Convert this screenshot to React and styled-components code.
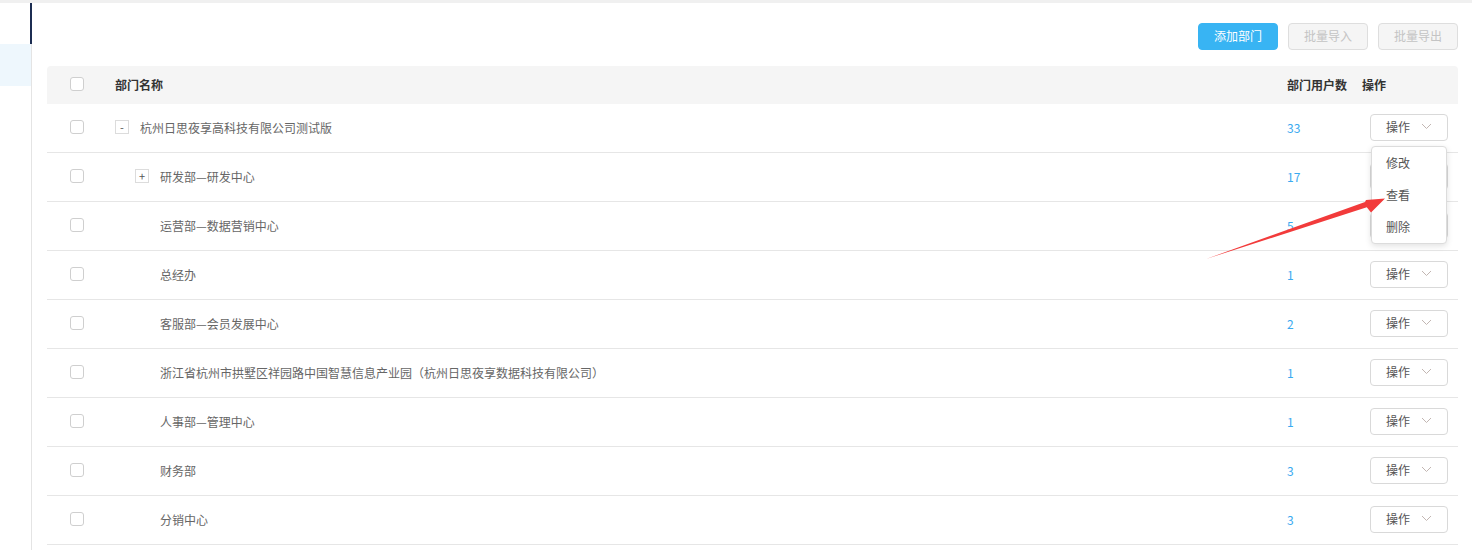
import React from "react";
import styled, { createGlobalStyle } from "styled-components";

const GlobalStyle = createGlobalStyle`
  html, body { margin: 0; padding: 0; background: #fff; }
  body {
    font-family: "Noto Sans CJK SC", "Noto Sans", "Liberation Sans", sans-serif;
    font-size: 12px;
    color: #666;
  }
  * { box-sizing: border-box; }
`;

const Page = styled.div`
  position: relative;
  width: 1472px;
  height: 550px;
  overflow: hidden;
  display: flex;
  flex-direction: column;
`;

const TopStrip = styled.div`
  height: 3px;
  background: #f0f0f0;
  flex-shrink: 0;
`;

const Body = styled.div`
  flex: 1;
  display: flex;
`;

const Sidebar = styled.div`
  width: 32px;
  flex-shrink: 0;
  border-right: 1px solid #e4e4e4;
  display: flex;
  flex-direction: column;
`;

const SideItem = styled.div`
  position: relative;
  height: ${(p) => p.$h}px;
  background: ${(p) => (p.$highlight ? "#eef7fd" : "transparent")};
  &::after {
    content: "";
    display: ${(p) => (p.$active ? "block" : "none")};
    position: absolute;
    top: 0;
    bottom: 0;
    right: -1px;
    width: 2px;
    background: #1c2d52;
  }
`;

const Main = styled.div`
  flex: 1;
  padding: 20px 14px 0 15px;
  display: flex;
  flex-direction: column;
`;

const Toolbar = styled.div`
  display: flex;
  justify-content: flex-end;
  gap: 10px;
`;

const ToolButton = styled.button`
  width: 80px;
  height: 27px;
  border-radius: 4px;
  font-family: inherit;
  font-size: 12px;
  padding: 0 0 2px;
  cursor: ${(p) => (p.disabled ? "not-allowed" : "pointer")};
  border: 1px solid ${(p) => (p.$primary ? "#38b4f3" : "#dedede")};
  background: ${(p) => (p.$primary ? "#38b4f3" : "#f5f5f5")};
  color: ${(p) => (p.$primary ? "#fff" : "#c4c4c4")};
`;

const Table = styled.div`
  margin-top: 16px;
  display: flex;
  flex-direction: column;
`;

const cols = "68px 1fr 75px 96px";

const HeaderRow = styled.div`
  display: grid;
  grid-template-columns: ${cols};
  align-items: center;
  height: 38px;
  padding-bottom: 2px;
  background: #f5f5f5;
  border-radius: 4px 4px 0 0;
  color: #333;
  font-weight: 700;
`;

const Row = styled.div`
  display: grid;
  grid-template-columns: ${cols};
  align-items: center;
  height: 49px;
  padding-bottom: 2px;
  border-bottom: 1px solid #e6e6e6;
`;

const CheckCell = styled.div`
  padding-left: 23px;
  display: flex;
  align-items: center;
`;

const Checkbox = styled.span`
  display: inline-block;
  width: 14px;
  height: 14px;
  border: 1px solid #cfcfcf;
  border-radius: 3px;
  background: #fff;
`;

const NameCell = styled.div`
  display: flex;
  align-items: center;
  padding-left: ${(p) => p.$level * 20}px;
  white-space: nowrap;
`;

const Toggle = styled.span`
  width: 14px;
  height: 14px;
  flex-shrink: 0;
  margin-right: 11px;
  border: 1px solid ${(p) => (p.$empty ? "transparent" : "#dcdcdc")};
  display: flex;
  align-items: center;
  justify-content: center;
  font-size: 11px;
  line-height: 1;
  color: #555;
`;

const CountCell = styled.div`
  color: #3aaaf0;
`;

const ActionCell = styled.div`
  padding-left: 8px;
`;

const ActionWrap = styled.div`
  position: relative;
  width: 78px;
`;

const ActionButton = styled.button`
  width: 78px;
  height: 27px;
  display: flex;
  align-items: center;
  padding: 0 0 1px 15px;
  background: #fff;
  border: 1px solid #d9d9d9;
  border-radius: 4px;
  font-family: inherit;
  font-size: 12px;
  color: #555;
  cursor: pointer;
  svg { margin-left: 11px; }
`;

const Menu = styled.div`
  position: absolute;
  top: calc(100% + 5px);
  left: 1px;
  width: 76px;
  background: #fff;
  border: 1px solid #dcdcdc;
  border-radius: 4px;
  box-shadow: 0 2px 6px rgba(0, 0, 0, 0.12);
  z-index: 10;
`;

const MenuItem = styled.div`
  height: 32px;
  line-height: 31px;
  padding-left: 14px;
  color: #555;
  cursor: pointer;
`;

const Overlay = styled.svg`
  position: absolute;
  left: 0;
  top: 0;
  pointer-events: none;
  z-index: 20;
`;

const Chevron = () => (
  <svg width="11" height="7" viewBox="0 0 11 7">
    <polyline points="1,1 5.5,5.5 10,1" fill="none" stroke="#c2b6b2" strokeWidth="1" />
  </svg>
);

const rows = [
  { name: "杭州日思夜享高科技有限公司测试版", level: 0, toggle: "-", count: 33, menu: true },
  { name: "研发部—研发中心", level: 1, toggle: "+", count: 17 },
  { name: "运营部—数据营销中心", level: 1, count: 5 },
  { name: "总经办", level: 1, count: 1 },
  { name: "客服部—会员发展中心", level: 1, count: 2 },
  { name: "浙江省杭州市拱墅区祥园路中国智慧信息产业园（杭州日思夜享数据科技有限公司）", level: 1, count: 1 },
  { name: "人事部—管理中心", level: 1, count: 1 },
  { name: "财务部", level: 1, count: 3 },
  { name: "分销中心", level: 1, count: 3 },
];

export default function App() {
  return (
    <Page>
      <GlobalStyle />
      <TopStrip />
      <Body>
        <Sidebar>
          <SideItem $h={41} $active />
          <SideItem $h={42} $highlight />
        </Sidebar>
        <Main>
          <Toolbar>
            <ToolButton $primary>添加部门</ToolButton>
            <ToolButton disabled>批量导入</ToolButton>
            <ToolButton disabled>批量导出</ToolButton>
          </Toolbar>
          <Table>
            <HeaderRow>
              <CheckCell>
                <Checkbox />
              </CheckCell>
              <NameCell $level={0}>部门名称</NameCell>
              <div>部门用户数</div>
              <div>操作</div>
            </HeaderRow>
            {rows.map((r, i) => (
              <Row key={i}>
                <CheckCell>
                  <Checkbox />
                </CheckCell>
                <NameCell $level={r.level}>
                  <Toggle $empty={!r.toggle}>{r.toggle || ""}</Toggle>
                  {r.name}
                </NameCell>
                <CountCell>{r.count}</CountCell>
                <ActionCell>
                  <ActionWrap>
                    <ActionButton>
                      操作
                      <Chevron />
                    </ActionButton>
                    {r.menu && (
                      <Menu>
                        <MenuItem>修改</MenuItem>
                        <MenuItem>查看</MenuItem>
                        <MenuItem>删除</MenuItem>
                      </Menu>
                    )}
                  </ActionWrap>
                </ActionCell>
              </Row>
            ))}
          </Table>
        </Main>
      </Body>
      <Overlay width="1472" height="550" viewBox="0 0 1472 550">
        <polygon
          points="1206,259 1366.8,207.2 1371,212.5 1385,198.5 1366,200 1365,202"
          fill="#f23b3b"
        />
      </Overlay>
    </Page>
  );
}
